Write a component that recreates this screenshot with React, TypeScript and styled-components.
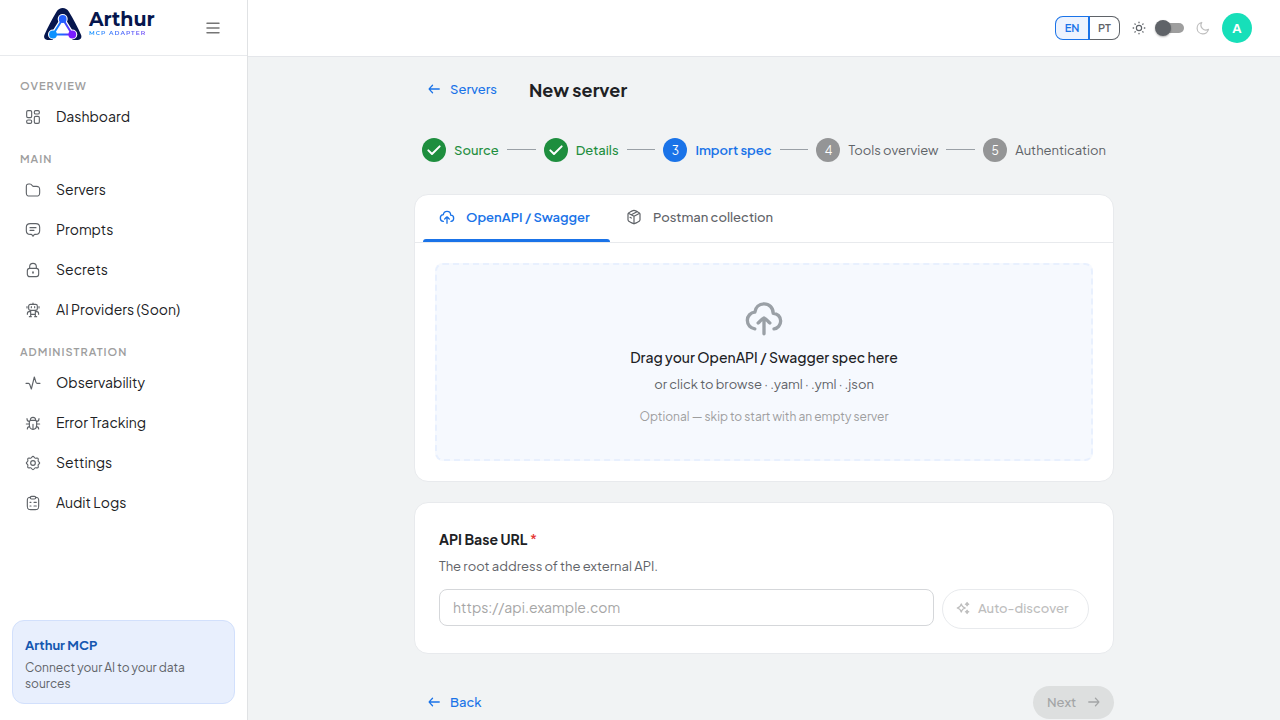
import React from "react";
import styled, { createGlobalStyle, css } from "styled-components";

const color = {
  blue: "#1a73e8",
  deepBlue: "#1557b0",
  green: "#1e8e3e",
  ink: "#202124",
  grey: "#5f6368",
  faint: "#9e9e9e",
  line: "#e8eaed",
  page: "#f1f3f4",
};

const GlobalStyle = createGlobalStyle`
  *, *::before, *::after { box-sizing: border-box; }
  body { margin: 0; color: ${color.ink}; background: ${color.page}; }
  body, button, input { font-family: "Plus Jakarta Sans", Inter, "Liberation Sans", sans-serif; }
  button { border: 0; background: none; padding: 0; cursor: pointer; }
  svg { display: block; flex: none; }
`;

const paths: Record<string, React.ReactNode> = {
  menu: <path d="M3 5h18M3 12h18M3 19h18" />,
  dashboard: (
    <>
      <rect x="2.5" y="2.5" width="7.5" height="10.5" rx="2" />
      <rect x="14" y="2.5" width="7.5" height="5" rx="2" />
      <rect x="2.5" y="16.5" width="7.5" height="5" rx="2" />
      <rect x="14" y="11" width="7.5" height="10.5" rx="2" />
    </>
  ),
  folder: <path d="M2 7c0-3 .5-4 3.500-4h1.800c2.200 0 2.700 1 3.400 2.300.4.800.9 1.200 1.800 1.200H17c4 0 5 1 5 5v4.500c0 4-1 5-5 5H7c-4 0-5-1-5-5z" />,
  prompt: (
    <>
      <path d="M8 2.500h8c4 0 6 1.500 6 5.500v5c0 4-2 5.500-6 5.500h-1.500c-.7 0-1 .5-2.500 3-1.500-2.500-1.800-3-2.500-3H8c-4 0-6-1.500-6-5.500V8c0-4 2-5.500 6-5.500z" />
      <path d="M7.500 8.500h9M7.500 12.500h6" />
    </>
  ),
  lock: (
    <>
      <path d="M7 9.500V7a5 5 0 0 1 10 0v2.500" />
      <rect x="3.500" y="9.500" width="17" height="12.500" rx="3.500" />
      <path d="M12 15v1.500" strokeWidth="2.500" />
    </>
  ),
  robot: (
    <>
      <rect x="5.500" y="3.500" width="13" height="9" rx="2.500" />
      <path d="M12 3.500V1.500M3 7v2M21 7v2M9.500 7v1.500M14.500 7v1.500M8.500 12.500V22M15.500 12.500V22M8.500 18.500h7M8.500 14.500H6c-2 0-2.500 1-2.500 4M15.500 14.500H18c2 0 2.500 1 2.500 4M6.500 22h3M14.500 22h3" />
    </>
  ),
  pulse: <path d="M1.500 12.500h3.800c1.200 0 1.400.5 1.800 1.700L9.500 21 14 3l2.500 8c.4 1.200.8 1.500 2 1.500h4" />,
  bug: (
    <>
      <path d="M6.500 10.500c0-1.500 1-2.500 2.500-2.500h6c1.500 0 2.500 1 2.500 2.500V15c0 4-2.500 6.500-5.500 6.500S6.500 19 6.500 15z" />
      <path d="M8 8c0-3 1.500-4.500 4-4.500S16 5 16 8M12 21v-7M6.500 13.500H2M22 13.500h-4.500M6.500 9.500C4.500 9.500 3 8.500 3 5.500M17.500 9.500c2 0 3.500-1 3.500-4M7 17.500c-2 0-3.500 1-3.500 3.500M17 17.500c2 0 3.500 1 3.500 3.500" />
    </>
  ),
  gear: (
    <>
      <path d="M12 2c1.600 0 1.900 2.200 3.400 2.800 1.400.6 3.100-.9 4.200.2 1.100 1-.4 2.800.2 4.200.5 1.400 2.200 1.200 2.200 2.800s-1.700 1.400-2.200 2.800c-.6 1.400.9 3.200-.2 4.200-1.100 1.100-2.800-.4-4.200.2-1.500.6-1.800 2.800-3.400 2.800s-1.900-2.200-3.400-2.800c-1.400-.6-3.100.9-4.200-.2-1.100-1 .4-2.800-.2-4.200C3.700 13.400 2 13.600 2 12s1.700-1.400 2.200-2.800c.6-1.400-.9-3.200.2-4.200 1.100-1.100 2.800.4 4.200-.2C10.100 4.200 10.400 2 12 2z" />
      <circle cx="12" cy="12" r="3.500" />
    </>
  ),
  clipboard: (
    <>
      <path d="M8 3.500c-3.500 0-4.500 1-4.500 4.500v9c0 4 1 5 5 5h7c4 0 5-1 5-5V8c0-3.500-1-4.500-4.500-4.500" />
      <rect x="8" y="2" width="8" height="4" rx="1.800" />
      <path d="M13.500 11H17M13.500 16.500H17M7.500 11h1.500M7.500 16.500h1.500" />
    </>
  ),
  sun: (
    <>
      <circle cx="12" cy="12" r="4.500" />
      <path d="M12 2v.8M12 21.200v.8M2 12h.8M21.200 12h.8M5 5l.5.5M18.500 18.500l.5.5M5 19l.5-.5M18.500 5.500 19 5" strokeWidth="2.200" />
    </>
  ),
  moon: <path d="M21.500 14.100A8.400 8.400 0 0 1 9.900 2.500 9.900 9.900 0 1 0 21.500 14.100z" />,
  left: <path d="M21 12H4M9.500 5.500 4 11.300Q3.500 12 4 12.700L9.500 18.500" />,
  right: <path d="M3 12h17M14.500 5.500l5.500 5.800q.5.700 0 1.400L14.500 18.500" />,
  upload: (
    <path d="M6.500 18.500C4 18.300 2 16.200 2 13.400c0-2.600 2-4.700 4.500-4.900C6.900 5.500 9 3.500 12 3.500c3.200 0 5.500 2.400 5.500 5.700 2.500 0 4.500 2 4.500 4.600 0 2.500-1.800 4.500-4 4.700M12 21.500V12M8.500 15c1.200-1 2-2.500 3.500-3 1.500.5 2.300 2 3.500 3" />
  ),
  box: (
    <>
      <path d="M12 2c-1 0-2 .5-4.500 1.700C4.500 5.200 3 5.800 3 7.500v9c0 1.700 1.500 2.300 4.500 3.800C10 21.500 11 22 12 22s2-.5 4.500-1.700c3-1.500 4.500-2.100 4.500-3.800v-9c0-1.700-1.500-2.300-4.500-3.800C14 2.500 13 2 12 2z" />
      <path d="M3.500 6.500 12 11l8.500-4.500M12 11v11M16.500 4 8 8.500M6 12.500l2 1" />
    </>
  ),
  spark: (
    <>
      <path d="M9 5c1 4.500 2.500 6 7 7-4.500 1-6 2.500-7 7-1-4.500-2.500-6-7-7 4.500-1 6-2.500 7-7z" />
      <path d="M19 2.500c.4 2 1 2.600 3 3-2 .4-2.600 1-3 3-.4-2-1-2.600-3-3 2-.4 2.600-1 3-3zM19 15.500c.4 2 1 2.600 3 3-2 .4-2.600 1-3 3-.4-2-1-2.600-3-3 2-.4 2.600-1 3-3z" fill="currentColor" />
    </>
  ),
  check: <path d="M3.500 12.500 9 18 20.500 6.500" />,
};

const Icon = ({ name, size = 16, weight = 1.7 }: { name: string; size?: number; weight?: number }) => (
  <svg width={size} height={size} viewBox="0 0 24 24" fill="none" stroke="currentColor" strokeWidth={weight} strokeLinecap="round" strokeLinejoin="round" aria-hidden="true">
    {paths[name]}
  </svg>
);

const Shell = styled.div`
  display: flex;
  height: 100vh;
`;

const Sidebar = styled.aside`
  display: flex;
  flex-direction: column;
  flex: none;
  width: 248px;
  background: #fff;
  border-right: 1px solid #e0e2e4;
`;

const SidebarHeader = styled.div`
  display: flex;
  align-items: center;
  justify-content: space-between;
  height: 56px;
  padding: 0 26px 0 43px;
  border-bottom: 1px solid ${color.line};
`;

const Brand = styled.a`
  display: flex;
  gap: 6px;
  padding-bottom: 8px;
  text-decoration: none;
`;

const BrandText = styled.span`
  display: flex;
  flex-direction: column;
  padding-top: 3px;
`;

const BrandName = styled.span`
  font: 700 19px/19px Montserrat, "Plus Jakarta Sans", Inter, sans-serif;
  color: #06164d;
`;

const BrandTag = styled.span`
  font: 600 6px/8px Montserrat, "Plus Jakarta Sans", Inter, sans-serif;
  letter-spacing: 1px;
  color: transparent;
  background: linear-gradient(90deg, #1297ff, #7a35f5);
  background-clip: text;
`;

const MenuButton = styled.button`
  color: #757575;
`;

const Nav = styled.nav`
  flex: 1;
  padding-top: 8px;
`;

const NavHeading = styled.h2`
  margin: 0;
  padding: 14px 20px 3px;
  font-size: 11px;
  font-weight: 600;
  line-height: 16px;
  letter-spacing: 1px;
  text-transform: uppercase;
  color: ${color.faint};
`;

const NavLink = styled.a`
  display: flex;
  align-items: flex-start;
  gap: 15px;
  height: 40px;
  padding: 12px 25px;
  font-size: 14px;
  line-height: 14px;
  color: ${color.ink};
  text-decoration: none;
  svg { color: ${color.grey}; }
`;

const Promo = styled.section`
  margin: 12px 12px 16px;
  padding: 12px 12px 11px;
  border: 1px solid #d2e0fc;
  border-radius: 12px;
  background: #e8effd;
`;

const PromoTitle = styled.h2`
  margin: 0 0 3px;
  font-size: 13px;
  line-height: 24px;
  font-weight: 700;
  color: ${color.deepBlue};
`;

const PromoText = styled.p`
  margin: 0;
  font-size: 12px;
  line-height: 16px;
  color: ${color.grey};
`;

const Page = styled.div`
  display: flex;
  flex: 1;
  flex-direction: column;
  min-width: 0;
`;

const TopBar = styled.header`
  display: flex;
  align-items: center;
  justify-content: flex-end;
  flex: none;
  height: 57px;
  padding: 0 28px;
  background: #fff;
  border-bottom: 1px solid #e4e6ea;
`;

const Languages = styled.div`
  display: flex;
  margin-right: 12px;
`;

const Language = styled.button<{ $on?: boolean }>`
  height: 24px;
  padding: 0 8px 1px;
  font-size: 11px;
  font-weight: 600;
  color: ${(p) => (p.$on ? color.blue : color.grey)};
  background: ${(p) => (p.$on ? "#edf3fe" : "#fff")};
  border: 1px solid ${(p) => (p.$on ? color.blue : color.grey)};
  &:first-child { width: 35px; border-right-width: 2px; border-radius: 8px 0 0 8px; }
  &:last-child { width: 30px; padding: 0 0 1px; border-left: 0; border-radius: 0 8px 8px 0; }
`;

const Theme = styled.label`
  display: flex;
  align-items: center;
  gap: 9px;
  margin-right: 12px;
  color: ${color.grey};
  svg:last-child { color: #bdbdbd; margin-left: 3px; }
`;

const Switch = styled.input`
  appearance: none;
  position: relative;
  width: 29px;
  height: 16px;
  margin: 0;
  &::before {
    content: "";
    position: absolute;
    inset: 3px 0 3px 2px;
    border-radius: 5px;
    background: ${color.faint};
  }
  &::after {
    content: "";
    position: absolute;
    inset: 0 auto 0 0;
    width: 16px;
    border-radius: 50%;
    background: ${color.grey};
    box-shadow: 0 1px 2px rgba(0, 0, 0, 0.3);
  }
`;

const Avatar = styled.button`
  width: 30px;
  height: 30px;
  border-radius: 50%;
  background: #17dfb9;
  color: #fff;
  font-size: 13px;
  font-weight: 700;
`;

const Main = styled.main`
  flex: 1;
  padding: 16px 24px 0;
  overflow-y: auto;
  scrollbar-width: none;
`;

const Column = styled.div`
  max-width: 700px;
  margin: 0 auto;
`;

const TitleRow = styled.div`
  display: flex;
  align-items: flex-start;
  gap: 20px;
  height: 33px;
`;

const TextAction = styled.button`
  display: flex;
  align-items: center;
  gap: 9px;
  height: 32px;
  padding: 0 12px 0 13px;
  font-size: 13px;
  font-weight: 500;
  color: ${color.blue};
`;

const Title = styled.h1`
  margin: 0;
  font-size: 18px;
  line-height: 34px;
  font-weight: 700;
`;

const Steps = styled.ol`
  display: flex;
  align-items: center;
  margin: 32px 0;
  padding: 0;
  list-style: none;
`;

type StepState = "done" | "active" | "todo";

const Step = styled.li<{ $state: StepState }>`
  display: flex;
  align-items: center;
  flex: none;
  gap: 8px;
  padding: 0 8px;
  font-size: 13px;
  font-weight: ${(p) => ({ done: 500, active: 600, todo: 400 })[p.$state]};
  color: ${(p) => ({ done: color.green, active: color.blue, todo: color.grey })[p.$state]};
`;

const StepMark = styled.span<{ $state: StepState }>`
  display: grid;
  place-items: center;
  width: 24px;
  height: 24px;
  border-radius: 50%;
  font-size: 12px;
  font-weight: 400;
  color: #fff;
  background: ${(p) => ({ done: color.green, active: color.blue, todo: "#949596" })[p.$state]};
`;

const StepLine = styled.li`
  flex: 1;
  height: 1px;
  margin-bottom: 2px;
  background: #9aa0a6;
`;

const Card = styled.section`
  margin-bottom: 20px;
  border: 1px solid ${color.line};
  border-radius: 14px;
  background: #fff;
`;

const Tabs = styled.div`
  display: flex;
  height: 48px;
  padding: 0 8px;
  border-bottom: 1px solid ${color.line};
`;

const Tab = styled.button<{ $on?: boolean }>`
  position: relative;
  display: flex;
  align-items: center;
  gap: 11px;
  min-width: 187px;
  padding: 0 16px 3px;
  font-size: 13px;
  font-weight: ${(p) => (p.$on ? 600 : 500)};
  color: ${(p) => (p.$on ? color.blue : color.grey)};
  ${(p) =>
    p.$on &&
    css`
      &::after {
        content: "";
        position: absolute;
        inset: auto 0 0;
        height: 3px;
        border-radius: 3px 3px 0 0;
        background: ${color.blue};
      }
    `}
`;

const DropZone = styled.label`
  display: flex;
  flex-direction: column;
  align-items: center;
  height: 198px;
  margin: 20px;
  padding-top: 33px;
  border: 2px dashed #e8f0fe;
  border-radius: 8px;
  background: #f6f9fe;
  cursor: pointer;
  svg { color: #9aa0a6; margin-bottom: 7px; }
`;

const FileInput = styled.input`
  position: absolute;
  width: 1px;
  height: 1px;
  opacity: 0;
`;

const DropTitle = styled.span`
  font-size: 14px;
  line-height: 24px;
  font-weight: 500;
`;

const DropText = styled.span`
  margin-top: 5px;
  font-size: 13px;
  line-height: 20px;
  color: ${color.grey};
`;

const DropNote = styled.span`
  margin-top: 13px;
  font-size: 12px;
  line-height: 20px;
  color: ${color.faint};
`;

const FormCard = styled(Card)`
  margin-bottom: 32px;
  padding: 24px;
`;

const FieldLabel = styled.label`
  display: block;
  font-size: 14px;
  line-height: 24px;
  font-weight: 700;
`;

const Required = styled.span`
  font-weight: 500;
  color: #e53935;
`;

const Hint = styled.p`
  margin: 5px 0 13px;
  font-size: 13px;
  line-height: 20px;
  color: ${color.grey};
`;

const FieldRow = styled.div`
  display: flex;
  align-items: flex-start;
  gap: 8px;
`;

const UrlInput = styled.input`
  flex: 1;
  min-width: 0;
  height: 37px;
  padding: 0 13px 2px;
  border: 1px solid #d5d7da;
  border-radius: 8px;
  font-size: 14px;
  &::placeholder { color: #a6a6a6; opacity: 1; }
`;

const Discover = styled.button`
  display: flex;
  align-items: center;
  gap: 8px;
  min-width: 147px;
  height: 40px;
  padding: 0 13px 2px;
  border: 1px solid ${color.line};
  border-radius: 20px;
  font-size: 13px;
  font-weight: 500;
  color: #bdbdbd;
`;

const Footer = styled.div`
  display: flex;
  justify-content: space-between;
`;

const Next = styled.button`
  display: flex;
  align-items: center;
  justify-content: space-between;
  min-width: 81px;
  height: 33px;
  padding: 0 13px 1px 14px;
  border-radius: 17px;
  font-size: 13px;
  font-weight: 500;
  color: #a3a5a6;
  background: #dddfdf;
`;

const LogoMark = () => (
  <svg width="40" height="34" viewBox="0 0 40 34" aria-hidden="true">
    <defs>
      <linearGradient id="edge" x1="10" y1="0" x2="30" y2="0" gradientUnits="userSpaceOnUse">
        <stop offset="0" stopColor="#0c92ff" />
        <stop offset="0.5" stopColor="#2460ff" />
        <stop offset="1" stopColor="#7a1cff" />
      </linearGradient>
    </defs>
    <path d="M13.500 4.800C15 2.200 17.300 1 19.700 1s4.700 1.200 6.200 3.800C30.500 12 35 21 38 27.800c1.300 3-.7 5.200-3 5.200H4.500c-2.300 0-4.300-2.200-3-5.200C4.500 21 9 12 13.500 4.800z" fill="#06164d" />
    <path d="M10 29v6h19.300v-6z" fill="#fff" />
    <path d="M19.700 12 10 27.500h19.300z" fill="#fff" stroke="#fff" strokeWidth="4.500" strokeLinejoin="round" />
    <g fill="#fff">
      <circle cx="19.700" cy="12" r="5" />
      <circle cx="10" cy="27.500" r="5" />
      <circle cx="29.300" cy="27.500" r="5" />
    </g>
    <path d="M19.700 12 10 27.500h19.300z" fill="#fff" stroke="url(#edge)" strokeWidth="2" />
    <circle cx="19.700" cy="12" r="3.900" fill="#2460ff" />
    <circle cx="10" cy="27.500" r="3.900" fill="#0c92ff" />
    <circle cx="29.300" cy="27.500" r="3.900" fill="#7a1cff" />
  </svg>
);

const groups = [
  { title: "Overview", items: [["dashboard", "Dashboard"]] },
  { title: "Main", items: [["folder", "Servers"], ["prompt", "Prompts"], ["lock", "Secrets"], ["robot", "AI Providers (Soon)"]] },
  { title: "Administration", items: [["pulse", "Observability"], ["bug", "Error Tracking"], ["gear", "Settings"], ["clipboard", "Audit Logs"]] },
];

const steps: { label: string; state: StepState }[] = [
  { label: "Source", state: "done" },
  { label: "Details", state: "done" },
  { label: "Import spec", state: "active" },
  { label: "Tools overview", state: "todo" },
  { label: "Authentication", state: "todo" },
];

export default function App() {
  return (
    <Shell>
      <GlobalStyle />
      <Sidebar>
        <SidebarHeader>
          <Brand href="#">
            <LogoMark />
            <BrandText>
              <BrandName>Arthur</BrandName>
              <BrandTag>MCP ADAPTER</BrandTag>
            </BrandText>
          </Brand>
          <MenuButton aria-label="Toggle menu"><Icon name="menu" weight={2.2} /></MenuButton>
        </SidebarHeader>
        <Nav>
          {groups.map((group) => (
            <React.Fragment key={group.title}>
              <NavHeading>{group.title}</NavHeading>
              {group.items.map(([icon, label]) => (
                <NavLink href="#" key={label}><Icon name={icon} />{label}</NavLink>
              ))}
            </React.Fragment>
          ))}
        </Nav>
        <Promo>
          <PromoTitle>Arthur MCP</PromoTitle>
          <PromoText>Connect your AI to your data sources</PromoText>
        </Promo>
      </Sidebar>
      <Page>
        <TopBar>
          <Languages>
            <Language $on>EN</Language>
            <Language>PT</Language>
          </Languages>
          <Theme>
            <Icon name="sun" size={14} weight={2} />
            <Switch type="checkbox" role="switch" aria-label="Dark mode" />
            <Icon name="moon" size={14} weight={2} />
          </Theme>
          <Avatar aria-label="Account">A</Avatar>
        </TopBar>
        <Main>
          <Column>
            <TitleRow>
              <TextAction><Icon name="left" size={14} weight={2.2} />Servers</TextAction>
              <Title>New server</Title>
            </TitleRow>
            <Steps>
              {steps.map((step, i) => (
                <React.Fragment key={step.label}>
                  {i > 0 && <StepLine aria-hidden="true" />}
                  <Step $state={step.state}>
                    <StepMark $state={step.state}>
                      {step.state === "done" ? <Icon name="check" weight={3} /> : i + 1}
                    </StepMark>
                    {step.label}
                  </Step>
                </React.Fragment>
              ))}
            </Steps>
            <Card>
              <Tabs role="tablist">
                <Tab $on role="tab" aria-selected="true"><Icon name="upload" weight={2} />OpenAPI / Swagger</Tab>
                <Tab role="tab" aria-selected="false"><Icon name="box" weight={1.8} />Postman collection</Tab>
              </Tabs>
              <DropZone>
                <FileInput type="file" accept=".yaml,.yml,.json" />
                <Icon name="upload" size={40} weight={2} />
                <DropTitle>Drag your OpenAPI / Swagger spec here</DropTitle>
                <DropText>or click to browse · .yaml · .yml · .json</DropText>
                <DropNote>Optional — skip to start with an empty server</DropNote>
              </DropZone>
            </Card>
            <FormCard>
              <FieldLabel htmlFor="base-url">API Base URL <Required>*</Required></FieldLabel>
              <Hint>The root address of the external API.</Hint>
              <FieldRow>
                <UrlInput id="base-url" type="url" placeholder="https://api.example.com" />
                <Discover disabled><Icon name="spark" size={14} weight={2} />Auto-discover</Discover>
              </FieldRow>
            </FormCard>
            <Footer>
              <TextAction><Icon name="left" size={14} weight={2.2} />Back</TextAction>
              <Next disabled>Next<Icon name="right" size={14} weight={2.2} /></Next>
            </Footer>
          </Column>
        </Main>
      </Page>
    </Shell>
  );
}
